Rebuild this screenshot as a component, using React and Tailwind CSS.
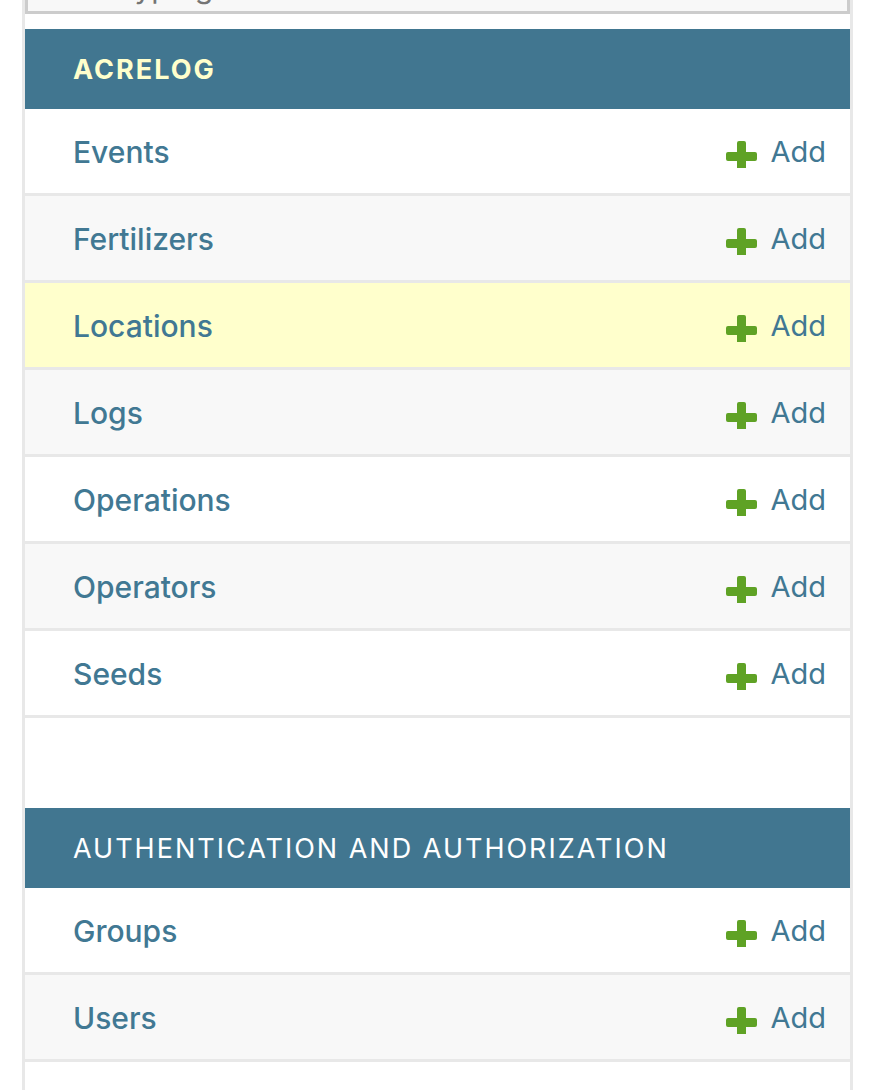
const sections = [
  {
    name: 'Acrelog',
    active: true,
    models: ['Events', 'Fertilizers', 'Locations', 'Logs', 'Operations', 'Operators', 'Seeds'],
  },
  {
    name: 'Authentication and Authorization',
    active: false,
    models: ['Groups', 'Users'],
  },
];

const currentModel = 'Locations';

function PlusIcon() {
  return (
    <svg className="h-[33px] w-[31px] shrink-0" viewBox="0 0 31 33" fill="#5fa225" aria-hidden="true">
      <path d="M13 5h5q2 0 2 2v9h9q2 0 2 2v5q0 2-2 2h-9v7h-9v-7H2q-2 0-2-2v-5q0-2 2-2h9V7q0-2 2-2z" />
    </svg>
  );
}

function ModelRow({ name }) {
  const background = name === currentModel ? 'bg-[#ffffcc]' : 'odd:bg-white even:bg-[#f8f8f8]';
  return (
    <tr className={`border-b-3 border-[#e8e8e8] ${background}`}>
      <th scope="row" className="pt-[21px] pb-[19px] pl-12 text-left text-[30px] font-medium">
        <a href="#" className="block leading-[44px]">{name}</a>
      </th>
      <td className="pt-[21px] pb-[19px] pr-6">
        <a href="#" className="flex items-center justify-end gap-[13px] leading-[44px]">
          <PlusIcon />
          Add
        </a>
      </td>
    </tr>
  );
}

function Section({ name, active, models }) {
  return (
    <table className="mb-[90px] w-full border-collapse text-[29px] text-[#417893]">
      <caption
        className={`bg-[#417690] px-12 pt-[21px] pb-[19px] text-left text-[27px] leading-10 tracking-[2px] uppercase ${
          active ? 'font-bold text-[#ffffcc]' : 'font-normal text-white'
        }`}
      >
        <a href="#">{name}</a>
      </caption>
      <tbody>
        {models.map((model) => (
          <ModelRow key={model} name={model} />
        ))}
      </tbody>
    </table>
  );
}

export default function App() {
  return (
    <div className="h-screen overflow-hidden bg-white pr-[19px] pl-[22px] font-['Inter','Liberation_Sans',sans-serif]">
      <nav className="min-h-full border-x-3 border-[#e8e8e8]" aria-label="Models">
        <div className="mb-[15px] flex h-3.5 items-end overflow-hidden">
          <input
            type="search"
            aria-label="Filter navigation items"
            placeholder="Start typing to filter…"
            className="h-[54px] w-full shrink-0 border-3 border-[#cccccc] bg-[#f8f8f8] px-5 text-[30px] placeholder:text-[#757575]"
          />
        </div>
        {sections.map((section) => (
          <Section key={section.name} {...section} />
        ))}
      </nav>
    </div>
  );
}
